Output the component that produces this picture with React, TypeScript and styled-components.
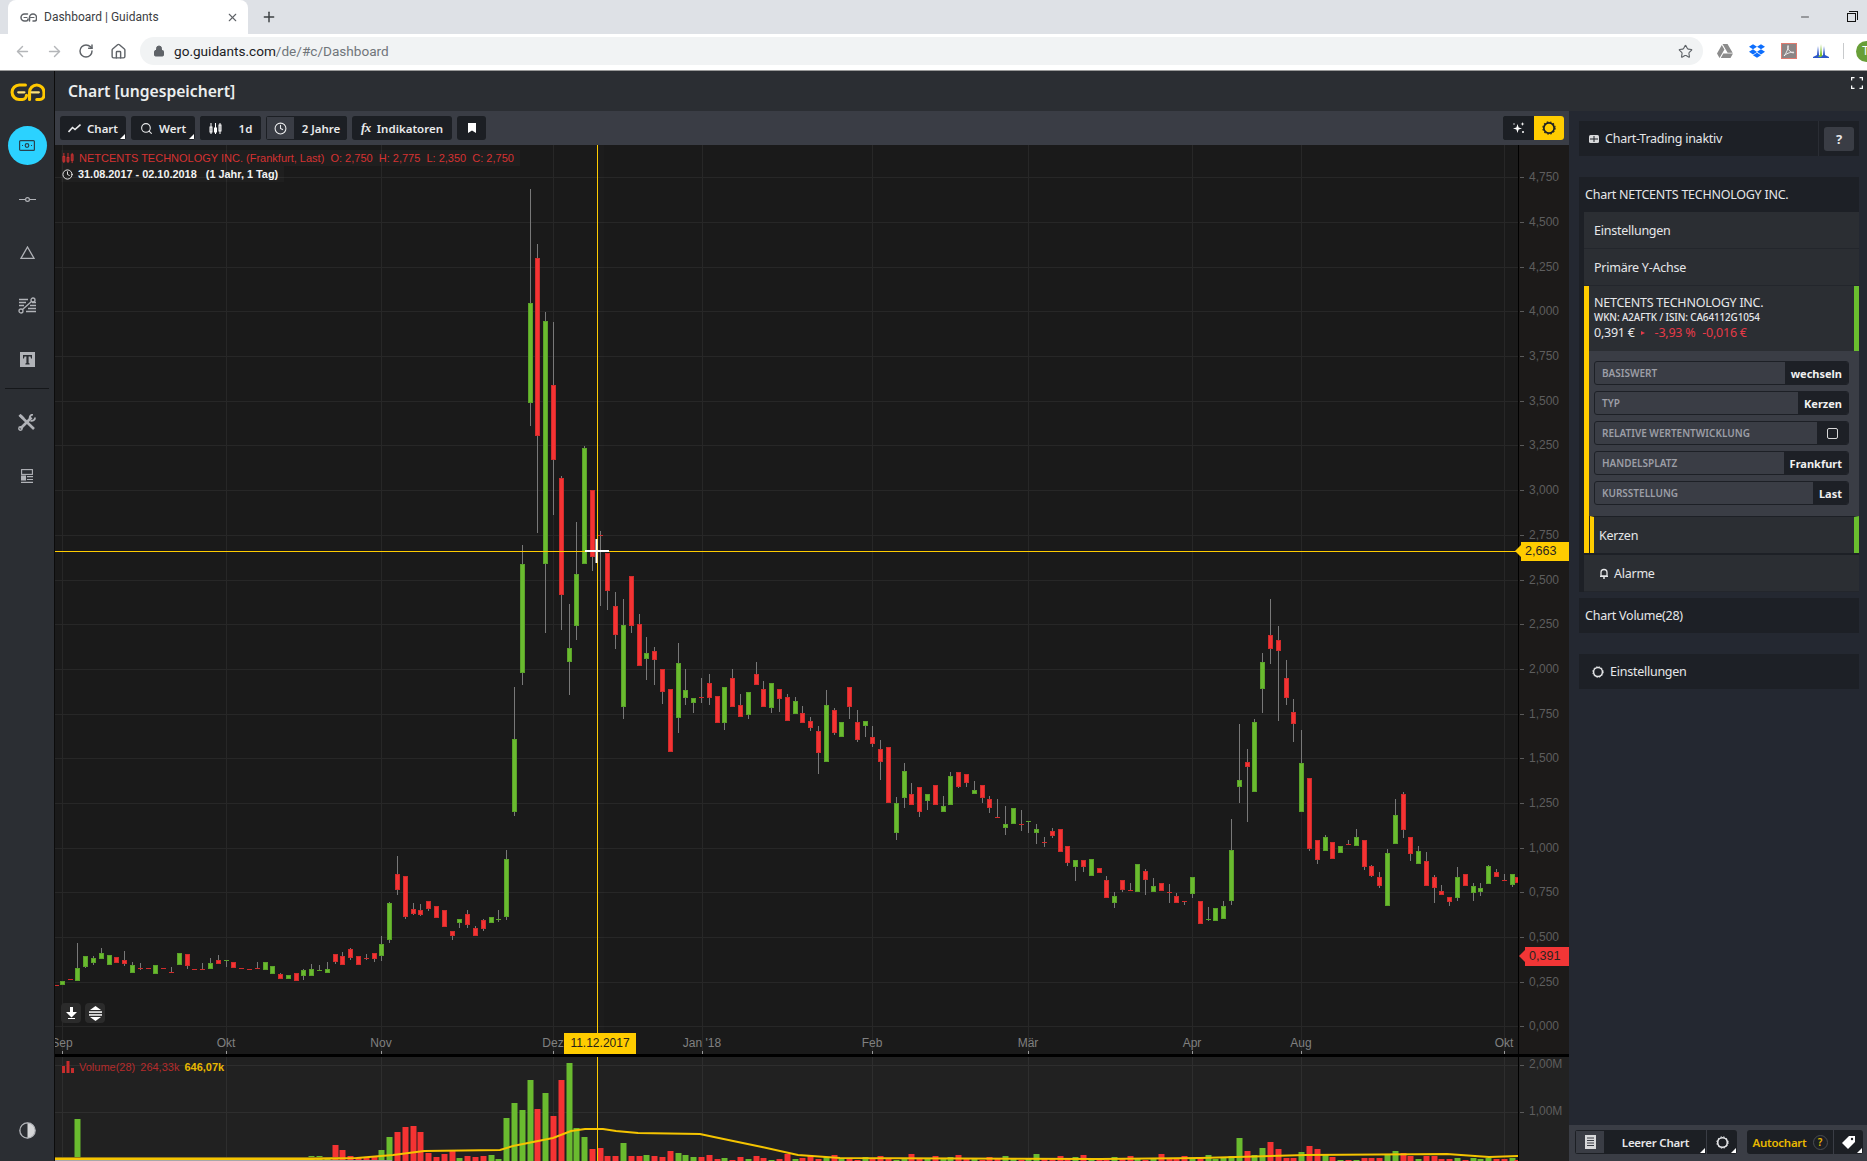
import React from "react";
import styled, { createGlobalStyle } from "styled-components";
import { ArrowLeft, ArrowRight, RotateCw, House, Lock, Star, Plus, X, Minus, Search, Clock } from "lucide-react";
import { FaDropbox, FaGoogleDrive } from "react-icons/fa";

type Row = [string, number, number, number, number?, number?];
type Candle = { x: number; top: number; bottom: number; high: number; low: number; up: boolean };

// colour, x, body top, body bottom, wick top, wick bottom
const earlyRows: Row[] = [
  ["r", 20, 435, 437], ["g", 37, 423, 431], ["r", 61, 417, 419], ["g", 82, 385, 419, 310], ["g", 106, 349, 377, 349, 383],
  ["g", 130, 355, 365, 348, 374], ["g", 154, 340, 353, 324], ["g", 178, 346, 371], ["r", 199, 352, 365], ["r", 223, 361, 369, 333, 378],
  ["g", 247, 376, 395, 366], ["r", 271, 385, 389, 369], ["r", 295, 384, 386], ["g", 316, 376, 398], ["r", 340, 384, 386],
  ["r", 364, 396, 398, 381], ["g", 388, 340, 371], ["r", 412, 343, 374, 343, 387], ["r", 433, 387, 389], ["r", 457, 387, 389, 369],
  ["g", 481, 370, 383, 354], ["r", 505, 361, 369, 346], ["g", 529, 360, 362, 360, 381], ["r", 550, 367, 380, 367, 384], ["r", 574, 384, 386],
  ["r", 598, 387, 389], ["r", 622, 384, 386, 366], ["g", 646, 367, 386], ["g", 667, 379, 398], ["r", 691, 403, 413, 400],
  ["g", 715, 406, 413], ["r", 739, 400, 419], ["g", 760, 391, 404, 388, 420], ["g", 784, 388, 404, 373], ["g", 808, 390, 392, 376],
  ["g", 832, 388, 395, 366], ["r", 856, 343, 362, 343, 372], ["r", 877, 349, 371, 336], ["r", 901, 328, 350, 324, 360], ["r", 925, 349, 371],
  ["r", 949, 354, 356, 342, 360], ["r", 973, 340, 353, 340, 366], ["g", 994, 313, 344, 289, 363], ["g", 1018, 190, 296, 186, 309],
  ["r", 1042, 103, 146, 48, 165], ["r", 1066, 109, 227, 109, 237], ["r", 1090, 208, 218, 189, 225], ["r", 1111, 211, 221, 192, 228],
  ["r", 1135, 184, 203, 184, 213], ["r", 1159, 199, 230], ["r", 1183, 211, 257], ["r", 1207, 274, 285, 274, 300],
  ["g", 1228, 238, 245, 238, 264], ["r", 1252, 223, 251, 210, 264], ["r", 1276, 265, 284, 258], ["r", 1300, 241, 263, 237, 273],
  ["g", 1324, 232, 245, 232, 249], ["g", 1345, 237, 239, 210, 246], ["g", 1369, 58, 227, 30, 240],
];

const spikeRows: Row[] = [
  ["g", 103, 1565, 1767, 1420, 1780], ["g", 127, 1075, 1377, 1022, 1413], ["g", 151, 345, 621, 25, 688], ["r", 172, 218, 713, 180, 988],
  ["g", 196, 396, 1071, 370, 1267], ["r", 220, 575, 780, 398, 937], ["r", 244, 835, 1160, 830, 1259], ["g", 268, 1309, 1346, 1187, 1441],
  ["g", 289, 1104, 1245, 958, 1287], ["g", 313, 749, 1071, 745, 1074], ["r", 337, 869, 1052, 869, 1094], ["r", 361, 994, 996, 983, 1192],
  ["r", 382, 1045, 1147, 1045, 1203], ["r", 406, 1194, 1270, 1154, 1312], ["g", 430, 1247, 1472, 1173, 1508], ["r", 454, 1110, 1245, 1110, 1267],
  ["r", 478, 1244, 1357, 1215], ["g", 499, 1323, 1337, 1280, 1399], ["r", 523, 1320, 1342, 1308, 1413], ["r", 547, 1370, 1430, 1370, 1466],
  ["r", 571, 1426, 1599], ["g", 595, 1351, 1503, 1295, 1547], ["g", 616, 1429, 1447, 1369, 1469], ["g", 640, 1449, 1461, 1449, 1491],
];

const slideRows: Row[] = [
  ["r", 4, 172, 178, 115, 188], ["r", 28, 130, 170, 102, 194], ["r", 52, 169, 245], ["g", 73, 142, 245, 142, 269], ["r", 97, 115, 197, 87],
  ["r", 121, 196, 227, 163, 230], ["g", 145, 157, 221, 157, 236], ["r", 169, 103, 131, 66], ["r", 190, 148, 197, 124], ["g", 214, 130, 200, 130, 218],
  ["r", 238, 148, 173, 148, 215], ["r", 262, 172, 239, 163, 242], ["g", 286, 184, 218, 171], ["r", 307, 220, 245, 198], ["r", 331, 244, 260, 232, 272],
  ["r", 355, 274, 335, 259, 401], ["g", 379, 196, 362, 151, 365], ["r", 403, 211, 275, 205, 284], ["g", 424, 247, 287], ["r", 448, 142, 197, 142, 236],
  ["r", 472, 247, 296, 210, 305], ["g", 496, 244, 254, 244, 290], ["r", 517, 292, 308, 259, 320], ["r", 541, 328, 362, 301, 419], ["r", 565, 322, 485, 322, 488],
  ["g", 589, 490, 575, 472, 599], ["g", 613, 394, 470, 370, 503], ["r", 634, 463, 491, 430], ["r", 658, 442, 512, 442, 530], ["g", 682, 463, 479, 463, 509],
  ["r", 706, 436, 491], ["g", 730, 499, 512, 469], ["g", 751, 409, 491, 397], ["r", 775, 397, 437, 397, 443], ["r", 799, 403, 425, 403, 440],
  ["g", 823, 451, 458, 424], ["r", 847, 436, 470, 436, 488], ["r", 868, 478, 500, 469, 518], ["r", 892, 531, 533, 478], ["g", 916, 553, 560, 499, 584],
  ["g", 940, 505, 548], ["r", 964, 552, 554, 511, 572], ["g", 985, 544, 548, 544, 578], ["g", 1009, 568, 575, 553, 611], ["r", 1033, 606, 608, 592, 620],
  ["r", 1057, 574, 586, 565, 593], ["r", 1081, 568, 632], ["r", 1102, 619, 665, 619, 677], ["g", 1126, 661, 677, 661, 722], ["r", 1150, 661, 677, 661, 695],
  ["g", 1174, 658, 704, 658, 707], ["r", 1198, 685, 695], ["r", 1219, 721, 770, 709], ["g", 1243, 769, 785, 757, 803], ["r", 1267, 721, 746, 721, 755],
  ["r", 1291, 750, 752, 730], ["g", 1312, 673, 752], ["r", 1336, 694, 716, 688, 764], ["g", 1360, 739, 752, 715], ["r", 1384, 730, 749],
  ["r", 1408, 756, 758, 733, 788], ["r", 1429, 769, 785, 760], ["r", 1453, 783, 785, 783, 796], ["g", 1477, 712, 758, 712, 773], ["r", 1501, 784, 848],
  ["g", 1525, 838, 842, 802], ["g", 1546, 805, 839],
];

const lateRows: Row[] = [
  ["g", 70, 979, 1013, 964], ["g", 94, 811, 959, 718, 975], ["g", 118, 601, 617, 433, 669], ["r", 142, 547, 557, 508, 726], ["g", 163, 427, 632, 418, 636],
  ["g", 187, 247, 323, 220, 399], ["r", 211, 166, 203, 58, 252], ["r", 235, 181, 209, 139, 423], ["r", 259, 295, 350, 241, 375], ["r", 280, 397, 428, 358, 486],
  ["g", 304, 550, 692, 451], ["r", 328, 595, 803, 595, 812], ["r", 352, 781, 838, 781, 852], ["g", 376, 772, 809, 766], ["r", 397, 787, 833],
  ["g", 421, 799, 815], ["r", 445, 792, 794, 781], ["g", 469, 772, 794, 748], ["r", 493, 781, 857, 781, 869], ["r", 514, 859, 884, 856, 890],
  ["r", 538, 892, 914, 877, 923], ["g", 562, 820, 974, 808], ["g", 586, 706, 788, 658, 791], ["r", 610, 643, 746, 637, 773], ["r", 631, 772, 818, 772, 842],
  ["g", 655, 814, 848, 798], ["r", 679, 844, 916, 817], ["r", 703, 892, 920, 886, 968], ["r", 724, 934, 941, 916], ["r", 748, 952, 964, 952, 977],
  ["g", 772, 892, 950, 862, 962], ["r", 796, 883, 916], ["g", 820, 919, 935, 910, 962], ["g", 841, 925, 932, 910, 947], ["g", 865, 859, 910, 856],
  ["r", 889, 877, 887, 868, 890], ["r", 913, 901, 903, 883], ["g", 937, 883, 911, 883, 920], ["r", 952, 892, 907],
];

function place(rows: Row[], ox: number, oy: number, sy: number): Candle[] {
  return rows.map(([c, x, top, bottom, high, low]) => ({
    x: Math.floor(ox + x / 3) + 0.5,
    top: Math.round(oy + top / sy),
    bottom: Math.round(oy + bottom / sy),
    high: Math.round(oy + (high ?? top) / sy),
    low: Math.round(oy + (low ?? bottom) / sy),
    up: c === "g",
  }));
}

const candles: Candle[] = [
  ...place(earlyRows, 50, 840, 3),
  ...place(spikeRows, 480, 180, 2.8),
  ...place(slideRows, 700, 640, 3),
  ...place(lateRows, 1200, 580, 3),
];

const firstVolumes = [
  1, 1, 1, 42, 2, 1, 1, 1, 1, 1, 1, 1, 1, 1, 1, 1, 1, 1, 1, 1, 1, 1, 1, 1, 1, 1, 1, 1, 1, 1, 1, 1, 1, 5, 5, 4, 16, 11, 5, 4, 4, 4, 11, 24, 29, 34, 35,
  29, 8, 4, 7, 11, 3, 5, 4, 5, 6, 2, 43, 58, 51, 81, 52, 68, 45, 81, 98, 33, 24, 12, 13, 5, 5, 18, 5, 5, 6, 5, 4, 10, 8, 6, 4,
];
const lateVolumes = [
  3, 5, 23, 10, 6, 13, 19, 12, 3, 3, 9, 15, 12, 6, 4, 1, 1, 1, 3, 3, 3, 7, 10, 8, 5, 2, 5, 5, 2, 2, 3, 1, 3, 2, 3, 2, 2, 3, 1,
];
const quietVolumes = [3, 5, 2, 4, 6, 2, 3, 1, 4, 2, 5, 3, 1, 2, 7, 2];

function volumeAt(i: number) {
  if (i < firstVolumes.length) return firstVolumes[i];
  const fromEnd = i - (candles.length - lateVolumes.length);
  if (fromEnd >= 0) return lateVolumes[fromEnd];
  return quietVolumes[i % quietVolumes.length];
}

const priceLabels = ["4,750", "4,500", "4,250", "4,000", "3,750", "3,500", "3,250", "3,000", "2,750", "2,500", "2,250", "2,000", "1,750", "1,500", "1,250", "1,000", "0,750", "0,500", "0,250", "0,000"];
const months: [number, string][] = [
  [62, "Sep"], [226, "Okt"], [381, "Nov"], [553, "Dez"], [702, "Jan '18"], [872, "Feb"], [1028, "Mär"], [1192, "Apr"], [1301, "Aug"], [1504, "Okt"],
];
const priceY = (i: number) => Math.round(1026.3 - (19 - i) * 44.68) + 0.5;

const avgLine =
  "55,1159 290,1159 312,1159 357,1158 393,1155 424,1151 500,1150 513,1146 553,1138 571,1131 585,1129 603,1129 616,1131 638,1133 700,1134 714,1137 762,1147 798,1155 840,1158 1100,1159 1200,1158 1306,1155 1447,1154 1489,1157 1518,1156";

const GlobalStyle = createGlobalStyle`
  html, body {
    margin: 0;
    height: 100%;
    overflow: hidden;
    background: #242831;
    font-family: "Noto Sans", sans-serif;
  }
  * { box-sizing: border-box; }
`;

const Page = styled.div`
  display: flex;
  flex-direction: column;
  width: 1867px;
  height: 1161px;
  overflow: hidden;
`;

const TabStrip = styled.div`
  display: flex;
  align-items: flex-end;
  height: 34px;
  background: #dee1e6;
  color: #333;
`;

const Tab = styled.div`
  display: flex;
  align-items: center;
  gap: 7px;
  width: 240px;
  height: 34px;
  margin-left: 8px;
  padding: 0 9px 0 12px;
  background: #fff;
  border-radius: 8px 8px 0 0;
  font: 12px Roboto, sans-serif;
  color: #3c4043;
`;

const TabTitle = styled.span`
  flex: 1;
`;

const NewTab = styled.div`
  display: flex;
  margin: 0 0 9px 13px;
  color: #3c4043;
`;

const WindowButtons = styled.div`
  display: flex;
  align-items: center;
  gap: 36px;
  margin: 0 11px 11px auto;
`;

const RestoreIcon = styled.div`
  position: relative;
  width: 9px;
  height: 9px;
  border: 1px solid #111;
  background: #dee1e6;
  &::before {
    content: "";
    position: absolute;
    top: -3px;
    right: -3px;
    width: 8px;
    height: 8px;
    border-top: 1px solid #111;
    border-right: 1px solid #111;
  }
`;

const BrowserBar = styled.div`
  display: flex;
  align-items: center;
  height: 37px;
  padding: 0 0 2px 14px;
  background: #fff;
  border-bottom: 1px solid #9a9a9a;
`;

const NavIcon = styled.div<{ $dim?: boolean }>`
  display: flex;
  flex: none;
  width: 32px;
  color: ${({ $dim }) => ($dim ? "#b4b6b9" : "#5f6368")};
`;

const AddressBar = styled.div`
  display: flex;
  flex: none;
  align-items: center;
  width: 1563px;
  height: 28px;
  margin-left: -2px;
  padding: 0 10px 0 13px;
  background: #f1f3f4;
  border-radius: 14px;
  color: #5f6368;
`;

const Url = styled.span`
  flex: 1;
  margin-left: 9px;
  font: 13.6px Roboto, sans-serif;
  color: #202124;
`;

const UrlRest = styled.span`
  color: #70757a;
`;

const Extensions = styled.div`
  display: flex;
  flex: none;
  align-items: center;
  gap: 16px;
  margin-left: 14px;
`;

const Separator = styled.div`
  width: 1px;
  height: 16px;
  margin-left: -2px;
  background: #c8cacc;
`;

const Avatar = styled.div`
  flex: none;
  width: 21px;
  height: 21px;
  margin-left: -4px;
  padding-left: 6px;
  border-radius: 50%;
  background: #689f38;
  color: #fff;
  font: 12px/21px Roboto, sans-serif;
`;

const Shell = styled.div`
  display: flex;
  flex: 1;
  min-height: 0;
`;

const Sidebar = styled.nav`
  display: flex;
  flex: none;
  flex-direction: column;
  align-items: center;
  width: 55px;
  background: #2b2e33;
  border-right: 1px solid #0c0c0c;
  color: #b1b3b8;
`;

const LogoBox = styled.div`
  display: flex;
  align-items: center;
  height: 42px;
  margin-bottom: 6px;
`;

const NavItem = styled.div<{ $active?: boolean }>`
  display: flex;
  align-items: center;
  justify-content: center;
  height: 53.4px;
  width: 39px;
  &::before {
    content: "";
    display: ${({ $active }) => ($active ? "block" : "none")};
    position: absolute;
    width: 39px;
    height: 39px;
    border-radius: 50%;
    background: #2bd2ff;
  }
  & > svg {
    position: relative;
  }
`;

const NavDivider = styled.div`
  width: 44px;
  height: 1px;
  margin: 2px 0 7px;
  background: #15171a;
`;

const NavFoot = styled.div`
  margin-top: auto;
  padding-bottom: 4px;
`;

const Main = styled.div`
  display: flex;
  flex: 1;
  flex-direction: column;
  min-width: 0;
`;

const TitleBar = styled.header`
  position: relative;
  display: flex;
  align-items: center;
  height: 40px;
  padding-left: 13px;
  background: #2b2e33;
  color: #eceeef;
  font-size: 15.7px;
  font-weight: 600;
`;

const FullScreen = styled.div`
  position: absolute;
  top: 6px;
  right: 4px;
  display: flex;
  color: #fff;
`;

const Workspace = styled.div`
  display: flex;
  flex: 1;
  min-height: 0;
`;

const ChartColumn = styled.section`
  display: flex;
  flex: none;
  flex-direction: column;
  width: 1514px;
`;

const Toolbar = styled.div`
  display: flex;
  flex: none;
  gap: 5px;
  height: 34px;
  padding: 5px;
  background: #3a3d45;
`;

const ToolButton = styled.div<{ $width: number; $menu?: boolean; $gold?: boolean; $shade?: boolean }>`
  position: relative;
  display: flex;
  align-items: center;
  justify-content: center;
  gap: 6px;
  width: ${({ $width }) => $width}px;
  height: 24px;
  border-radius: 3px;
  background: ${({ $gold, $shade }) => ($gold ? "#ffcc00" : $shade ? "#3a3d45" : "#1c1f24")};
  box-shadow: ${({ $shade }) => ($shade ? "inset 0 0 0 1px #1c1f24" : "none")};
  color: ${({ $gold }) => ($gold ? "#1c1f24" : "#e9eaeb")};
  font-size: 11.5px;
  font-weight: 600;
  &::after {
    content: "";
    display: ${({ $menu }) => ($menu ? "block" : "none")};
    position: absolute;
    right: 1px;
    bottom: 1px;
    border-style: solid;
    border-width: 0 0 5px 5px;
    border-color: transparent transparent #fff transparent;
  }
`;

const SplitButton = styled.div<{ $end?: boolean }>`
  display: flex;
  margin-left: ${({ $end }) => ($end ? "auto" : "0")};
  border-radius: 3px;
  overflow: hidden;
  background: #1c1f24;
`;

const SplitPart = styled(ToolButton)`
  border-radius: 0;
`;

const FxMark = styled.span`
  font: italic 700 13px "Liberation Serif", serif;
  letter-spacing: -0.5px;
`;

const ChartStage = styled.div`
  position: relative;
  flex: none;
  height: 909px;
  background: #1a1a1a;
  overflow: hidden;
`;

const Drawing = styled.svg`
  display: block;
  font-family: "Liberation Sans", sans-serif;
`;

const Legend = styled.div`
  position: absolute;
  top: 5px;
  left: 6px;
  display: flex;
  flex-direction: column;
  align-items: flex-start;
  font-family: "Liberation Sans", sans-serif;
  font-size: 11px;
  white-space: pre;
`;

const LegendRow = styled.div<{ $strong?: boolean }>`
  display: flex;
  align-items: center;
  gap: 5px;
  height: 16px;
  padding: 0 6px 0 1px;
  background: rgba(255, 255, 255, 0.025);
  color: ${({ $strong }) => ($strong ? "#f2f2f2" : "#d63232")};
  font-size: ${({ $strong }) => ($strong ? "10.9px" : "11px")};
  font-weight: ${({ $strong }) => ($strong ? 700 : 400)};
`;

const PriceTag = styled.div<{ $top: number; $bg: string; $left: number }>`
  position: absolute;
  top: ${({ $top }) => $top}px;
  left: ${({ $left }) => $left}px;
  right: 0;
  height: 19px;
  padding-left: 4px;
  background: ${({ $bg }) => $bg};
  color: #2a2420;
  font: 12.6px/19px "Liberation Sans", sans-serif;
  &::before {
    content: "";
    position: absolute;
    top: 3px;
    left: -6px;
    border-style: solid;
    border-width: 6.5px 6px 6.5px 0;
    border-color: transparent ${({ $bg }) => $bg} transparent transparent;
  }
`;

const DateTag = styled.div`
  position: absolute;
  top: 888px;
  left: 509px;
  width: 72px;
  height: 21px;
  background: #ffcc00;
  color: #26221a;
  font: 12px/21px "Liberation Sans", sans-serif;
  text-align: center;
`;

const ScaleButtons = styled.div`
  position: absolute;
  top: 858px;
  left: 6px;
  display: flex;
  gap: 4px;
`;

const ScaleButton = styled.div`
  display: flex;
  align-items: center;
  justify-content: center;
  width: 20px;
  height: 20px;
  border-radius: 4px;
  background: #2b2b2b;
  color: #fff;
`;

const SplitLine = styled.div`
  flex: none;
  height: 3px;
  background: #000;
`;

const VolumePanel = styled.div`
  position: relative;
  flex: 1;
  background: #212121;
  overflow: hidden;
`;

const VolumeLegend = styled.div`
  position: absolute;
  top: 4px;
  left: 7px;
  display: flex;
  align-items: center;
  gap: 5px;
  font: 11px "Liberation Sans", sans-serif;
  color: #b52c2c;
`;

const VolumeNow = styled.b`
  color: #e8b800;
`;

const SidePanel = styled.aside`
  display: flex;
  flex: 1;
  flex-direction: column;
  min-width: 0;
  padding-top: 10px;
  background: #242831;
  color: #e6e7e9;
  font-size: 12.5px;
  letter-spacing: -0.25px;
`;

const PanelBar = styled.div<{ $gap: number; $height?: number; $inset?: number }>`
  display: flex;
  flex: none;
  align-items: center;
  gap: 6px;
  height: ${({ $height }) => $height ?? 35}px;
  margin: 0 8px ${({ $gap }) => $gap}px 10px;
  padding-left: ${({ $inset }) => $inset ?? 6}px;
  background: #1d2026;
`;

const HelpBox = styled.div`
  display: flex;
  align-items: center;
  align-self: stretch;
  margin-left: auto;
  padding: 0 5px;
  border-left: 1px solid #2a2d34;
`;

const HelpButton = styled.div`
  width: 30px;
  height: 24px;
  border-radius: 3px;
  background: #3a3d45;
  font: 700 13px/24px "Noto Sans", sans-serif;
  text-align: center;
`;

const PanelGroup = styled.div`
  flex: none;
  margin: 0 8px 6px 10px;
  padding-left: 5px;
  background: #1d2026;
`;

const GroupRow = styled.div<{ $bell?: boolean }>`
  display: flex;
  align-items: center;
  gap: 5px;
  height: 37px;
  padding-left: ${({ $bell }) => ($bell ? 15 : 10)}px;
  background: #2b2e33;
  border-bottom: 1px solid #23262c;
`;

const ItemBlock = styled.div`
  border-left: 5px solid #ffcc00;
`;

const ItemHead = styled.div`
  height: 65px;
  padding: 9px 0 0 5px;
  background: #2b2e33;
  border-right: 5px solid #6abf2e;
  line-height: 16px;
`;

const ItemCodes = styled.div`
  font-size: 9.9px;
  font-weight: 500;
  line-height: 13px;
  letter-spacing: -0.1px;
`;

const ItemQuote = styled.div`
  display: flex;
  align-items: center;
  gap: 7px;
  line-height: 17px;
`;

const Loss = styled.span`
  color: #e63a48;
`;

const LossMark = styled.span`
  width: 0;
  height: 0;
  margin: 0 3px 0 -1px;
  border-style: solid;
  border-width: 2px 0 2px 4px;
  border-color: transparent transparent transparent #e63a48;
`;

const SettingList = styled.div`
  display: flex;
  flex-direction: column;
  gap: 6px;
  height: 165px;
  padding: 10px 10px 0 5px;
  background: #3a3d45;
`;

const SettingRow = styled.div`
  display: flex;
  align-items: stretch;
  height: 24px;
  border: 1px solid #1d2026;
  border-radius: 3px;
  overflow: hidden;
`;

const SettingLabel = styled.div`
  flex: 1;
  padding-left: 7px;
  color: #9c9ea6;
  font-size: 10px;
  font-weight: 600;
  line-height: 22px;
  letter-spacing: 0;
`;

const SettingValue = styled.div`
  display: flex;
  align-items: center;
  justify-content: center;
  padding: 0 6px;
  background: #1d2026;
  color: #f0f0f0;
  font-size: 11px;
  font-weight: 700;
  letter-spacing: 0;
`;

const CheckBox = styled.div`
  width: 11px;
  height: 11px;
  margin: 0 4px;
  border: 1.5px solid #d8d8d8;
  border-radius: 2px;
`;

const SubItem = styled.div`
  display: flex;
  align-items: center;
  height: 37px;
  margin: 0 0 2px 1px;
  padding-left: 5px;
  background: #2b2e33;
  border-left: 4px solid #ffcc00;
  border-right: 5px solid #6abf2e;
  border-top: 1px solid #1d2026;
`;

const FootBar = styled.div`
  display: flex;
  align-items: center;
  gap: 10px;
  height: 36px;
  margin-top: auto;
  padding: 0 3px 2px 6px;
  background: #3a3d45;
`;

const FootGroup = styled.div`
  display: flex;
  height: 24px;
  border-radius: 3px;
  overflow: hidden;
  background: #1c1f24;
  font-size: 11.5px;
  font-weight: 600;
`;

const FootPart = styled.div<{ $width: number; $menu?: boolean; $shade?: boolean; $divide?: boolean }>`
  position: relative;
  display: flex;
  align-items: center;
  justify-content: center;
  gap: 6px;
  width: ${({ $width }) => $width}px;
  background: ${({ $shade }) => ($shade ? "#3a3d45" : "transparent")};
  box-shadow: ${({ $shade }) => ($shade ? "inset 0 0 0 1px #1c1f24" : "none")};
  border-left: ${({ $divide }) => ($divide ? "1px solid #3a3d45" : "0")};
  &::after {
    content: "";
    display: ${({ $menu }) => ($menu ? "block" : "none")};
    position: absolute;
    right: 1px;
    bottom: 1px;
    border-style: solid;
    border-width: 0 0 5px 5px;
    border-color: transparent transparent #fff transparent;
  }
`;

const AutoLabel = styled.span`
  color: #e8b800;
`;

const HelpRing = styled.span`
  width: 15px;
  height: 15px;
  border: 1px solid #4a4c52;
  border-radius: 50%;
  color: #e8b800;
  font-size: 10px;
  line-height: 13px;
  text-align: center;
`;

function Logo({ color = "#ffc800", bar = "#ffe27a", size = 35 }: { color?: string; bar?: string; size?: number }) {
  return (
    <svg width={size} height={(size * 18) / 34} viewBox="0 0 34 18" fill="none" strokeWidth="3" strokeLinecap="round">
      <path d="M15 2H9a7 7 0 0 0 0 14h3a4 4 0 0 0 4-4" stroke={color} />
      <path d="M19 16V9a7 7 0 0 1 14 0v3a4 4 0 0 1-4 4h-3" stroke={color} />
      <path d="M8 9h6M21 9h7" stroke={bar} strokeWidth="2.2" />
    </svg>
  );
}

function LineChartIcon() {
  return (
    <svg width="13" height="13" viewBox="0 0 13 13" fill="none" stroke="currentColor" strokeWidth="1.6">
      <path d="M.5 10 4.500 5.500 7 7.500 12.500 2.500" />
    </svg>
  );
}

function CandleIcon({ color = "#fff", size = 13 }: { color?: string; size?: number }) {
  return (
    <svg width={size} height={size} viewBox="0 0 13 13" fill="none" stroke={color} strokeWidth="1">
      <path d="M2 1v11M6.500 1v11M11 1v11" />
      <rect x="1" y="5" width="2" height="5" />
      <rect x="5.500" y="6" width="2" height="4" />
      <rect x="10" y="3" width="2" height="6" />
    </svg>
  );
}

function BookmarkIcon() {
  return (
    <svg width="8" height="10" viewBox="0 0 8 10" fill="#fff">
      <path d="M0 0h8v10L4 7.500 0 10z" />
    </svg>
  );
}

function RingIcon({ size = 14, color = "currentColor" }: { size?: number; color?: string }) {
  return (
    <svg width={size} height={size} viewBox="0 0 13 13" fill="none" stroke={color} strokeWidth="1.600">
      <circle cx="6.500" cy="6.500" r="4.800" />
      <circle cx="6.500" cy="6.500" r="5.700" strokeWidth="1" strokeDasharray="1.500 1.500" />
    </svg>
  );
}

function StarsIcon() {
  return (
    <svg width="13" height="13" viewBox="0 0 13 13" fill="#fff">
      <path d="M5.500 2 6.600 5.400 10 6.500 6.600 7.600 5.500 11 4.400 7.600 1 6.500 4.400 5.400z" />
      <path d="M10.500 0 11 1.500 12.500 2 11 2.500 10.500 4 10 2.500 8.500 2 10 1.500z" />
      <circle cx="11" cy="10" r="1" />
      <circle cx="2" cy="2" r=".7" />
    </svg>
  );
}

function MoneyIcon() {
  return (
    <svg width="16" height="11" viewBox="0 0 16 11" fill="none" stroke="#28424f" strokeWidth="1.200">
      <rect x=".6" y=".6" width="14.800" height="9.800" rx="1" />
      <circle cx="8" cy="5.500" r="1.800" />
      <path d="M3 5.500h1M12 5.500h1" />
    </svg>
  );
}

function ToolsIcon() {
  return (
    <svg width="18" height="17" viewBox="0 0 18 17" fill="none" stroke="currentColor">
      <path d="M1.500 1 16 15" strokeWidth="2.600" />
      <path d="M1 1.500 3 .5l3 3-1.500 1.500z" fill="currentColor" strokeWidth=".5" />
      <path d="M13.500 3.500 2.500 14.500" strokeWidth="2.600" />
      <path d="M17 3.500a3.300 3.300 0 0 1-4.500 3.200M11.800 4.800A3.300 3.300 0 0 1 15 .6" strokeWidth="1.800" />
      <circle cx="2.500" cy="14.500" r="1.700" strokeWidth="1.400" />
    </svg>
  );
}

function RouteIcon() {
  return (
    <svg width="18" height="17" viewBox="0 0 18 17" fill="none" stroke="currentColor" strokeWidth="1.300">
      <path d="M1 2.500h9M1 5.500h7M1 8.500h5M10 11.500h8M8 14.500h10M12 8.500h6M14 5.500h4" />
      <circle cx="3" cy="14" r="2" />
      <circle cx="15" cy="3" r="2" />
      <path d="M4.500 12.500 13.500 4.500" />
    </svg>
  );
}

function TextBoxIcon() {
  return (
    <svg width="15" height="15" viewBox="0 0 15 15">
      <rect width="15" height="15" fill="#b1b3b8" />
      <path d="M3 3h9v3.500h-1L10.500 4.500H8.600v6.500l1 .6v.9H5.400v-.9l1-.6V4.500H4.500L4 6.500H3z" fill="#2b2e33" />
    </svg>
  );
}

function NewsIcon() {
  return (
    <svg width="12" height="15" viewBox="0 0 12 15" fill="none" stroke="currentColor" strokeWidth="1.100">
      <rect x=".6" y=".6" width="10.800" height="4.800" />
      <rect x=".5" y="7" width="4" height="4" fill="currentColor" />
      <path d="M6 7.600h6M6 10.500h6M0 13.400h12" />
    </svg>
  );
}

function ContrastIcon() {
  return (
    <svg width="17" height="17" viewBox="0 0 17 17">
      <circle cx="8.500" cy="8.500" r="7.700" fill="#d5d6d8" stroke="#b1b3b8" strokeWidth="1.200" />
      <path d="M8.500 1.500a7 7 0 0 0 0 14z" fill="#2b2e33" />
    </svg>
  );
}

function Corners() {
  return (
    <svg width="12" height="12" viewBox="0 0 12 12" fill="none" stroke="#fff" strokeWidth="1.300">
      <path d="M.6 3.500V.6h2.900M8.500.6h2.900v2.900M11.400 8.500v2.900H8.500M3.500 11.400H.6V8.500" />
    </svg>
  );
}

function DropIcon() {
  return (
    <svg width="11" height="12" viewBox="0 0 11 12" fill="#fff">
      <path d="M4 0h3v5h4L5.500 10.500 0 5h4z" />
      <rect x="2" y="11" width="7" height="1" />
    </svg>
  );
}

function ExpandIcon() {
  return (
    <svg width="13" height="15" viewBox="0 0 13 15" fill="#fff">
      <path d="M6.500 0 12 4H1zM6.500 15 1 11h11z" />
      <rect y="5.300" width="13" height="1.500" />
      <rect y="8.200" width="13" height="1.500" />
    </svg>
  );
}

function BellIcon() {
  return (
    <svg width="10" height="11" viewBox="0 0 10 11" fill="none" stroke="#e6e7e9" strokeWidth="1.300">
      <path d="M2 8V4.500a3 3 0 0 1 6 0V8zM1 8.300h8M4 10h2" />
    </svg>
  );
}

function SmallBars({ color, size = 12 }: { color: string; size?: number }) {
  return (
    <svg width={size} height={size} viewBox="0 0 12 12" fill={color}>
      <rect y="5" width="3" height="7" />
      <rect x="4.500" width="3" height="12" />
      <rect x="9" y="7" width="3" height="5" />
    </svg>
  );
}

function TradeIcon() {
  return (
    <svg width="10" height="8" viewBox="0 0 10 8" fill="#d8d9db">
      <rect width="10" height="8" rx="1.500" />
      <path d="M1 4h8M5 1v6" stroke="#1d2026" />
    </svg>
  );
}

function SheetIcon() {
  return (
    <svg width="11" height="14" viewBox="0 0 11 14" fill="#d8d9db">
      <rect width="11" height="14" />
      <path d="M2 3h7M2 5.500h7M2 8h7M2 10.500h7" stroke="#3a3d45" />
    </svg>
  );
}

function TagIcon() {
  return (
    <svg width="13" height="13" viewBox="0 0 13 13" fill="#fff">
      <path d="M7 0h6v6l-7 7-6-6z" />
      <circle cx="10" cy="3" r="1.200" fill="#1c1f24" />
    </svg>
  );
}

function PdfIcon() {
  return (
    <svg width="16" height="16" viewBox="0 0 16 16" fill="none">
      <rect x=".5" y=".5" width="15" height="15" fill="#8b8585" stroke="#e07a6e" />
      <path d="M3 13C5 11 7.500 5 7.300 3 7 1.500 6 3.500 7.500 6.500 9 9.500 13 10.500 13 9.500 13 8.500 6 9.500 3 13z" stroke="#fff" strokeWidth=".8" />
    </svg>
  );
}

function PeaksIcon() {
  return (
    <svg width="16" height="16" viewBox="0 0 16 16">
      <path d="M0 14 4 12 5 3 6 12 8 14z" fill="#2d56c9" />
      <path d="M5 14 7 12 8 1 9 12 11 14z" fill="#7fbf2c" />
      <path d="M8 14 10 12 11 3 12 12 16 14z" fill="#2d56c9" />
      <rect y="14" width="16" height="1" fill="#2d56c9" />
    </svg>
  );
}

function CandleLayer() {
  return (
    <g>
      {candles.map((c) => {
        const fill = c.up ? "#6abb2f" : "#f53333";
        const edge = c.up ? "#5aa329" : "#d12c2c";
        const flat = c.bottom - c.top <= 2;
        return (
          <g key={c.x}>
            {(c.high < c.top || c.low > c.bottom) && <line x1={c.x} x2={c.x} y1={c.high} y2={c.low} stroke="#787878" />}
            {flat ? (
              <rect x={c.x - 2.5} y={c.top} width="5" height="1" fill={edge} />
            ) : (
              <rect x={c.x - 2} y={c.top + 0.5} width="4" height={c.bottom - c.top} fill={fill} stroke={edge} />
            )}
          </g>
        );
      })}
    </g>
  );
}

function PriceChart() {
  return (
    <Drawing width="1514" height="909" viewBox="55 145 1514 909">
      {priceLabels.map((label, i) => (
        <line key={label} x1="55" x2="1518" y1={priceY(i)} y2={priceY(i)} stroke="#272727" />
      ))}
      {months.map(([x, label]) => (
        <line key={label + x} x1={x + 0.5} x2={x + 0.5} y1="145" y2="1054" stroke="#272727" />
      ))}
      <rect x="598" y="145" width="6" height="909" fill="#ffffff" opacity="0.012" />
      <CandleLayer />
      <rect x="1518" y="145" width="51" height="909" fill="#1c1a19" />
      <line x1="1518.500" x2="1518.500" y1="145" y2="1054" stroke="#000" />
      {priceLabels.map((label, i) => (
        <g key={label}>
          <line x1="1520" x2="1524" y1={priceY(i)} y2={priceY(i)} stroke="#5a5a5a" />
          <text x="1529" y={priceY(i) + 3} fontSize="12" fill="#5e5e5e">
            {label}
          </text>
        </g>
      ))}
      {months.map(([x, label]) => (
        <g key={label + x}>
          <line x1={x + 0.5} x2={x + 0.5} y1="1051" y2="1054" stroke="#9a9a9a" />
          <text x={x} y="1047" fontSize="12" fill="#808080" textAnchor="middle">
            {label}
          </text>
        </g>
      ))}
      <line x1="597.500" x2="597.500" y1="145" y2="1054" stroke="#ffcc00" />
      <line x1="55" x2="1519" y1="551.500" y2="551.500" stroke="#ffcc00" />
      <path d="M585 551h24M596.500 539v24" stroke="#fff" strokeWidth="2" />
    </Drawing>
  );
}

function VolumeChart() {
  return (
    <Drawing width="1514" height="104" viewBox="55 1057 1514 104">
      <line x1="55" x2="1518" y1="1065.500" y2="1065.500" stroke="#2e2e2e" />
      <line x1="55" x2="1518" y1="1112.500" y2="1112.500" stroke="#2e2e2e" />
      {months.map(([x, label]) => (
        <line key={label + x} x1={x + 0.5} x2={x + 0.5} y1="1057" y2="1161" stroke="#2e2e2e" />
      ))}
      {candles.map((c, i) => {
        const h = volumeAt(i);
        return <rect key={c.x} x={c.x - 3} y={1161 - h} width="6" height={h} fill={c.up ? "#6abb2f" : "#f53333"} />;
      })}
      <line x1="55" x2="340" y1="1157.500" y2="1157.500" stroke="#9a7d12" />
      <polyline points={avgLine} fill="none" stroke="#f5c400" strokeWidth="2" />
      <rect x="55" y="1160" width="337" height="1" fill="#a8a8a8" />
      <rect x="1518" y="1057" width="51" height="104" fill="#222" />
      <line x1="1518.500" x2="1518.500" y1="1057" y2="1161" stroke="#000" />
      <line x1="1520" x2="1524" y1="1065.500" y2="1065.500" stroke="#5a5a5a" />
      <line x1="1520" x2="1524" y1="1112.500" y2="1112.500" stroke="#5a5a5a" />
      <text x="1529" y="1068" fontSize="12" fill="#5e5e5e">
        2,00M
      </text>
      <text x="1529" y="1115" fontSize="12" fill="#5e5e5e">
        1,00M
      </text>
      <line x1="597.500" x2="597.500" y1="1057" y2="1161" stroke="#ffcc00" />
    </Drawing>
  );
}

export default function App() {
  return (
    <Page>
      <GlobalStyle />
      <TabStrip>
        <Tab>
          <Logo color="#5f6368" bar="#5f6368" size={17} />
          <TabTitle>Dashboard | Guidants</TabTitle>
          <X size={13} strokeWidth={2} color="#5f6368" />
        </Tab>
        <NewTab>
          <Plus size={16} strokeWidth={2.2} />
        </NewTab>
        <WindowButtons>
          <Minus size={12} strokeWidth={1.4} color="#111" />
          <RestoreIcon />
        </WindowButtons>
      </TabStrip>
      <BrowserBar>
        <NavIcon $dim>
          <ArrowLeft size={17} />
        </NavIcon>
        <NavIcon $dim>
          <ArrowRight size={17} />
        </NavIcon>
        <NavIcon>
          <RotateCw size={16} strokeWidth={2.2} />
        </NavIcon>
        <NavIcon>
          <House size={17} />
        </NavIcon>
        <AddressBar>
          <Lock size={12} fill="#5f6368" />
          <Url>
            go.guidants.com<UrlRest>/de/#c/Dashboard</UrlRest>
          </Url>
          <Star size={15} strokeWidth={1.8} />
        </AddressBar>
        <Extensions>
          <FaGoogleDrive size={16} color="#8c8c8c" />
          <FaDropbox size={16} color="#0d6efd" />
          <PdfIcon />
          <PeaksIcon />
          <Separator />
          <Avatar>T</Avatar>
        </Extensions>
      </BrowserBar>
      <Shell>
        <Sidebar>
          <LogoBox>
            <Logo />
          </LogoBox>
          <NavItem $active>
            <MoneyIcon />
          </NavItem>
          <NavItem>
            <svg width="17" height="5" viewBox="0 0 17 5" fill="none" stroke="currentColor" strokeWidth="1.200">
              <path d="M0 2.500h6M11 2.500h6" />
              <circle cx="8.500" cy="2.500" r="1.900" />
            </svg>
          </NavItem>
          <NavItem>
            <svg width="15" height="13" viewBox="0 0 15 13" fill="none" stroke="currentColor" strokeWidth="1.300">
              <path d="M7.500 1 14 12.300H1z" />
            </svg>
          </NavItem>
          <NavItem>
            <RouteIcon />
          </NavItem>
          <NavItem>
            <TextBoxIcon />
          </NavItem>
          <NavDivider />
          <NavItem>
            <ToolsIcon />
          </NavItem>
          <NavItem>
            <NewsIcon />
          </NavItem>
          <NavFoot>
            <NavItem>
              <ContrastIcon />
            </NavItem>
          </NavFoot>
        </Sidebar>
        <Main>
          <TitleBar>
            Chart [ungespeichert]
            <FullScreen>
              <Corners />
            </FullScreen>
          </TitleBar>
          <Workspace>
            <ChartColumn>
              <Toolbar>
                <ToolButton $width={66} $menu>
                  <LineChartIcon />
                  Chart
                </ToolButton>
                <ToolButton $width={64} $menu>
                  <Search size={13} strokeWidth={2} />
                  Wert
                </ToolButton>
                <SplitButton>
                  <SplitPart $width={30}>
                    <CandleIcon />
                  </SplitPart>
                  <SplitPart $width={31}>1d</SplitPart>
                </SplitButton>
                <SplitButton>
                  <SplitPart $width={29} $shade>
                    <Clock size={13} strokeWidth={2} />
                  </SplitPart>
                  <SplitPart $width={52}>2 Jahre</SplitPart>
                </SplitButton>
                <ToolButton $width={100}>
                  <FxMark>fx</FxMark>
                  Indikatoren
                </ToolButton>
                <ToolButton $width={29}>
                  <BookmarkIcon />
                </ToolButton>
                <SplitButton $end>
                  <SplitPart $width={31}>
                    <StarsIcon />
                  </SplitPart>
                  <SplitPart $width={30} $gold>
                    <RingIcon />
                  </SplitPart>
                </SplitButton>
              </Toolbar>
              <ChartStage>
                <PriceChart />
                <Legend>
                  <LegendRow>
                    <CandleIcon color="#d63232" size={12} />
                    NETCENTS TECHNOLOGY INC. (Frankfurt, Last)  O: 2,750  H: 2,775  L: 2,350  C: 2,750
                  </LegendRow>
                  <LegendRow $strong>
                    <Clock size={11} strokeWidth={2} color="#f2f2f2" />
                    31.08.2017 - 02.10.2018   (1 Jahr, 1 Tag)
                  </LegendRow>
                </Legend>
                <PriceTag $top={397} $left={1466} $bg="#ffcc00">
                  2,663
                </PriceTag>
                <PriceTag $top={802} $left={1470} $bg="#f23636">
                  0,391
                </PriceTag>
                <ScaleButtons>
                  <ScaleButton>
                    <DropIcon />
                  </ScaleButton>
                  <ScaleButton>
                    <ExpandIcon />
                  </ScaleButton>
                </ScaleButtons>
                <DateTag>11.12.2017</DateTag>
              </ChartStage>
              <SplitLine />
              <VolumePanel>
                <VolumeChart />
                <VolumeLegend>
                  <SmallBars color="#c72d2d" />
                  Volume(28)
                  <span>264,33k</span>
                  <VolumeNow>646,07k</VolumeNow>
                </VolumeLegend>
              </VolumePanel>
            </ChartColumn>
            <SidePanel>
              <PanelBar $gap={21} $inset={10}>
                <TradeIcon />
                Chart-Trading inaktiv
                <HelpBox>
                  <HelpButton>?</HelpButton>
                </HelpBox>
              </PanelBar>
              <PanelBar $gap={0}>Chart NETCENTS TECHNOLOGY INC.</PanelBar>
              <PanelGroup>
                <GroupRow>Einstellungen</GroupRow>
                <GroupRow>Primäre Y-Achse</GroupRow>
                <ItemBlock>
                  <ItemHead>
                    NETCENTS TECHNOLOGY INC.
                    <ItemCodes>WKN: A2AFTK / ISIN: CA64112G1054</ItemCodes>
                    <ItemQuote>
                      0,391 €
                      <LossMark />
                      <Loss>-3,93 %</Loss>
                      <Loss>-0,016 €</Loss>
                    </ItemQuote>
                  </ItemHead>
                  <SettingList>
                    <SettingRow>
                      <SettingLabel>BASISWERT</SettingLabel>
                      <SettingValue>wechseln</SettingValue>
                    </SettingRow>
                    <SettingRow>
                      <SettingLabel>TYP</SettingLabel>
                      <SettingValue>Kerzen</SettingValue>
                    </SettingRow>
                    <SettingRow>
                      <SettingLabel>RELATIVE WERTENTWICKLUNG</SettingLabel>
                      <SettingValue>
                        <CheckBox />
                      </SettingValue>
                    </SettingRow>
                    <SettingRow>
                      <SettingLabel>HANDELSPLATZ</SettingLabel>
                      <SettingValue>Frankfurt</SettingValue>
                    </SettingRow>
                    <SettingRow>
                      <SettingLabel>KURSSTELLUNG</SettingLabel>
                      <SettingValue>Last</SettingValue>
                    </SettingRow>
                  </SettingList>
                  <SubItem>Kerzen</SubItem>
                </ItemBlock>
                <GroupRow $bell>
                  <BellIcon />
                  Alarme
                </GroupRow>
              </PanelGroup>
              <PanelBar $gap={21}>Chart Volume(28)</PanelBar>
              <PanelBar $gap={0} $inset={13}>
                <RingIcon size={12} color="#e6e7e9" />
                Einstellungen
              </PanelBar>
              <FootBar>
                <FootGroup>
                  <FootPart $width={30} $shade>
                    <SheetIcon />
                  </FootPart>
                  <FootPart $width={101} $menu>
                    Leerer Chart
                  </FootPart>
                  <FootPart $width={31} $menu $divide>
                    <RingIcon size={13} />
                  </FootPart>
                </FootGroup>
                <FootGroup>
                  <FootPart $width={86}>
                    <AutoLabel>Autochart</AutoLabel>
                    <HelpRing>?</HelpRing>
                  </FootPart>
                  <FootPart $width={30} $menu $divide>
                    <TagIcon />
                  </FootPart>
                </FootGroup>
              </FootBar>
            </SidePanel>
          </Workspace>
        </Main>
      </Shell>
    </Page>
  );
}
